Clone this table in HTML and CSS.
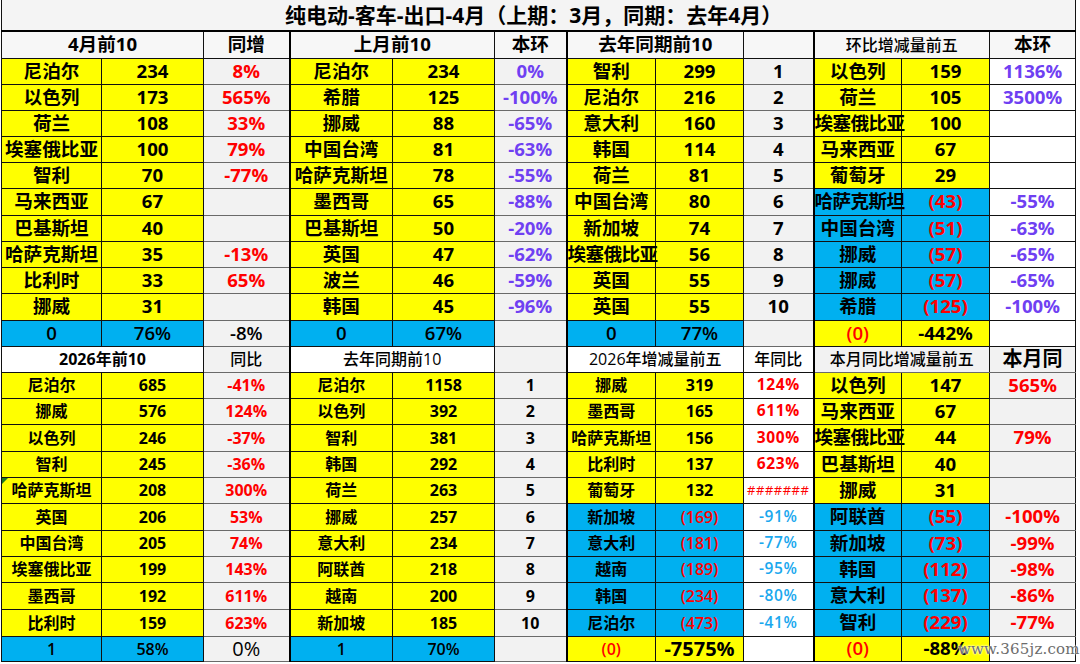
FILE: index.html
```html
<!DOCTYPE html>
<html lang="zh-CN">
<head>
<meta charset="utf-8">
<title>纯电动-客车-出口-4月</title>
<link rel="stylesheet" href="styles.css">
</head>
<body>
<table class="sheet">
<colgroup>
<col style="width:100px"><col style="width:102px"><col style="width:86px"><col style="width:103px"><col style="width:102px"><col style="width:72px"><col style="width:89px"><col style="width:88px"><col style="width:70px"><col style="width:88px"><col style="width:88px"><col style="width:86px">
</colgroup>
<tr class="title"><td colspan="12">纯电动-客车-出口-4月（上期：3月，同期：去年4月）</td></tr>
<tr class="h1">
<td colspan="2" class="hw">4月前10</td><td class="hw">同增</td>
<td colspan="2" class="hw k">上月前10</td><td class="hw">本环</td>
<td colspan="2" class="hw k">去年同期前10</td><td class="hw"></td>
<td colspan="2" class="hw k hs">环比增减量前五</td><td class="hw">本环</td>
</tr>
<tr class="t h26"><td class="y">尼泊尔</td><td class="y">234</td><td class="g r">8%</td><td class="y k">尼泊尔</td><td class="y">234</td><td class="g p">0%</td><td class="y k">智利</td><td class="y">299</td><td class="g">1</td><td class="y k">以色列</td><td class="y">159</td><td class="w p">1136%</td></tr>
<tr class="t h26"><td class="y">以色列</td><td class="y">173</td><td class="g r">565%</td><td class="y k">希腊</td><td class="y">125</td><td class="g p">-100%</td><td class="y k">尼泊尔</td><td class="y">216</td><td class="g">2</td><td class="y k">荷兰</td><td class="y">105</td><td class="w p">3500%</td></tr>
<tr class="t h26"><td class="y">荷兰</td><td class="y">108</td><td class="g r">33%</td><td class="y k">挪威</td><td class="y">88</td><td class="g p">-65%</td><td class="y k">意大利</td><td class="y">160</td><td class="g">3</td><td class="y k tight">埃塞俄比亚</td><td class="y">100</td><td class="w"></td></tr>
<tr class="t h26"><td class="y">埃塞俄比亚</td><td class="y">100</td><td class="g r">79%</td><td class="y k">中国台湾</td><td class="y">81</td><td class="g p">-63%</td><td class="y k">韩国</td><td class="y">114</td><td class="g">4</td><td class="y k">马来西亚</td><td class="y">67</td><td class="w"></td></tr>
<tr class="t h26"><td class="y">智利</td><td class="y">70</td><td class="g r">-77%</td><td class="y k">哈萨克斯坦</td><td class="y">78</td><td class="g p">-55%</td><td class="y k">荷兰</td><td class="y">81</td><td class="g">5</td><td class="y k">葡萄牙</td><td class="y">29</td><td class="w"></td></tr>
<tr class="t h27"><td class="y">马来西亚</td><td class="y">67</td><td class="g"></td><td class="y k">墨西哥</td><td class="y">65</td><td class="g p">-88%</td><td class="y k">中国台湾</td><td class="y">80</td><td class="g">6</td><td class="b k tight">哈萨克斯坦</td><td class="b r">(43)</td><td class="w p">-55%</td></tr>
<tr class="t h26"><td class="y">巴基斯坦</td><td class="y">40</td><td class="g"></td><td class="y k">巴基斯坦</td><td class="y">50</td><td class="g p">-20%</td><td class="y k">新加坡</td><td class="y">74</td><td class="g">7</td><td class="b k">中国台湾</td><td class="b r">(51)</td><td class="w p">-63%</td></tr>
<tr class="t h26"><td class="y">哈萨克斯坦</td><td class="y">35</td><td class="g r">-13%</td><td class="y k">英国</td><td class="y">47</td><td class="g p">-62%</td><td class="y k tight">埃塞俄比亚</td><td class="y">56</td><td class="g">8</td><td class="b k">挪威</td><td class="b r">(57)</td><td class="w p">-65%</td></tr>
<tr class="t h26"><td class="y">比利时</td><td class="y">33</td><td class="g r">65%</td><td class="y k">波兰</td><td class="y">46</td><td class="g p">-59%</td><td class="y k">英国</td><td class="y">55</td><td class="g">9</td><td class="b k">挪威</td><td class="b r">(57)</td><td class="w p">-65%</td></tr>
<tr class="t h27"><td class="y">挪威</td><td class="y">31</td><td class="g"></td><td class="y k">韩国</td><td class="y">45</td><td class="g p">-96%</td><td class="y k">英国</td><td class="y">55</td><td class="g">10</td><td class="b k">希腊</td><td class="b r">(125)</td><td class="w p">-100%</td></tr>
<tr class="t h26 sum"><td class="b m">0</td><td class="b m">76%</td><td class="g m">-8%</td><td class="b k m">0</td><td class="b m">67%</td><td class="g"></td><td class="b k m">0</td><td class="b m">77%</td><td class="g"></td><td class="y k r m">(0)</td><td class="y">-442%</td><td class="w"></td></tr>
<tr class="h2">
<td colspan="2" class="w hb">2026年前10</td><td class="g hn">同比</td>
<td colspan="2" class="w k hn">去年同期前10</td><td class="g"></td>
<td colspan="2" class="w k hn">2026年增减量前五</td><td class="w hn">年同比</td>
<td colspan="2" class="g k hn">本月同比增减量前五</td><td class="g hbig">本月同</td>
</tr>
<tr class="s h26"><td class="y">尼泊尔</td><td class="y">685</td><td class="g r">-41%</td><td class="y k">尼泊尔</td><td class="y">1158</td><td class="g">1</td><td class="y k">挪威</td><td class="y">319</td><td class="w r yr">124%</td><td class="y k L">以色列</td><td class="y L">147</td><td class="g r L">565%</td></tr>
<tr class="s h26"><td class="y">挪威</td><td class="y">576</td><td class="g r">124%</td><td class="y k">以色列</td><td class="y">392</td><td class="g">2</td><td class="y k">墨西哥</td><td class="y">165</td><td class="w r yr">611%</td><td class="y k L">马来西亚</td><td class="y L">67</td><td class="g"></td></tr>
<tr class="s h27"><td class="y">以色列</td><td class="y">246</td><td class="g r">-37%</td><td class="y k">智利</td><td class="y">381</td><td class="g">3</td><td class="y k">哈萨克斯坦</td><td class="y">156</td><td class="w r yr">300%</td><td class="y k L tight">埃塞俄比亚</td><td class="y L">44</td><td class="g r L">79%</td></tr>
<tr class="s h26"><td class="y">智利</td><td class="y">245</td><td class="g r">-36%</td><td class="y k">韩国</td><td class="y">292</td><td class="g">4</td><td class="y k">比利时</td><td class="y">137</td><td class="w r yr">623%</td><td class="y k L">巴基斯坦</td><td class="y L">40</td><td class="g"></td></tr>
<tr class="s h26"><td class="y tri">哈萨克斯坦</td><td class="y">208</td><td class="g r">300%</td><td class="y k">荷兰</td><td class="y">263</td><td class="g">5</td><td class="y k">葡萄牙</td><td class="y">132</td><td class="w r hash">#######</td><td class="y k L">挪威</td><td class="y L">31</td><td class="g"></td></tr>
<tr class="s h27"><td class="y">英国</td><td class="y">206</td><td class="g r">53%</td><td class="y k">挪威</td><td class="y">257</td><td class="g">6</td><td class="b k">新加坡</td><td class="b r m">(169)</td><td class="w c">-91%</td><td class="b k L">阿联酋</td><td class="b r L">(55)</td><td class="g r L">-100%</td></tr>
<tr class="s h26"><td class="y">中国台湾</td><td class="y">205</td><td class="g r">74%</td><td class="y k">意大利</td><td class="y">234</td><td class="g">7</td><td class="b k">意大利</td><td class="b r m">(181)</td><td class="w c">-77%</td><td class="b k L">新加坡</td><td class="b r L">(73)</td><td class="g r L">-99%</td></tr>
<tr class="s h26"><td class="y">埃塞俄比亚</td><td class="y">199</td><td class="g r">143%</td><td class="y k">阿联酋</td><td class="y">218</td><td class="g">8</td><td class="b k">越南</td><td class="b r m">(189)</td><td class="w c">-95%</td><td class="b k L">韩国</td><td class="b r L">(112)</td><td class="g r L">-98%</td></tr>
<tr class="s h27"><td class="y">墨西哥</td><td class="y">192</td><td class="g r">611%</td><td class="y k">越南</td><td class="y">200</td><td class="g">9</td><td class="b k">韩国</td><td class="b r m">(234)</td><td class="w c">-80%</td><td class="b k L">意大利</td><td class="b r L">(137)</td><td class="g r L">-86%</td></tr>
<tr class="s h27"><td class="y">比利时</td><td class="y">159</td><td class="g r">623%</td><td class="y k">新加坡</td><td class="y">185</td><td class="g">10</td><td class="b k">尼泊尔</td><td class="b r m">(473)</td><td class="w c">-41%</td><td class="b k L">智利</td><td class="b r L">(229)</td><td class="g r L">-77%</td></tr>
<tr class="s h25 sum"><td class="b m">1</td><td class="b m">58%</td><td class="g big n">0%</td><td class="b k m">1</td><td class="b m">70%</td><td class="g"></td><td class="y k r m">(0)</td><td class="y big">-7575%</td><td class="w"></td><td class="y k r L m">(0)</td><td class="y L">-88%</td><td class="w"></td></tr>
</table>
<div class="wm">www.365jz.com</div>
</body>
</html>
```
FILE: styles.css
```css
* { box-sizing: border-box; }
html, body { margin: 0; padding: 0; background: #fff; }
body {
  position: relative;
  width: 1080px;
  height: 664px;
  overflow: hidden;
  font-family: "Open Sans", "Noto Sans CJK SC", sans-serif;
  color: #000;
}
.sheet {
  border-collapse: collapse;
  table-layout: fixed;
  width: 1075px;
  margin-left: 1px;
}
.sheet td {
  border: 1px solid #111;
  padding: 0;
  text-align: center;
  vertical-align: middle;
  white-space: nowrap;
  line-height: 1;
  font-weight: 700;
  font-size: 18.6px;
  overflow: visible;
}
.title td {
  height: 31px;
  background: #f4f4f4;
  font-size: 21px;
  border-top: 0;
  border-bottom: 2px solid #000;
  padding-right: 10px;
}
.h1 td { height: 27px; font-size: 18.6px; }
.h26 td { height: 26px; }
.h27 td { height: 27px; }
.h25 td { height: 25px; }
.h2 td { height: 26px; }

.hw { background: #f7f7f7; }
.hs { font-size: 16px !important; font-weight: 500 !important; }
.hb { font-size: 16px !important; }
.hn { font-size: 16px !important; font-weight: 500 !important; }
.hbig { font-size: 20px !important; }

.y { background: #ffff00; }
.b { background: #00b0f0; }
.g { background: #f2f2f2; }
.w { background: #fff; }
.g { border-top-color: #6a6a6a !important; border-bottom-color: #6a6a6a !important; }

.k { border-left: 2px solid #000 !important; }

.r { color: #ff0000; }
.p { color: #6f40f2; font-weight: 700 !important; }
.c { color: #1aa8ee; font-weight: 600 !important; font-size: 15.5px !important; letter-spacing: 0.6px; }
.m { font-weight: 600 !important; }
.n { font-weight: 400 !important; }

.s td { font-size: 16px; }
.s td.L { font-size: 18.6px; }
.s td.yr { font-size: 15.5px; letter-spacing: 0.6px; }
.s td.hash { font-size: 13px; font-weight: 400; letter-spacing: 0.5px; }
.s td.big { font-size: 20px; }

.tight { letter-spacing: -0.6px; }

.tri { position: relative; }
.tri::before {
  content: "";
  position: absolute;
  left: 0;
  top: 0;
  border-top: 6px solid #1e7a1e;
  border-right: 6px solid transparent;
}

.wm {
  position: absolute;
  left: 958px;
  top: 640px;
  font-family: "DejaVu Serif", serif;
  font-size: 15px;
  color: #6c6c6c;
  letter-spacing: 0.2px;
  text-shadow: 0 0 2px #fff, 0 0 2px #fff;
}
```
